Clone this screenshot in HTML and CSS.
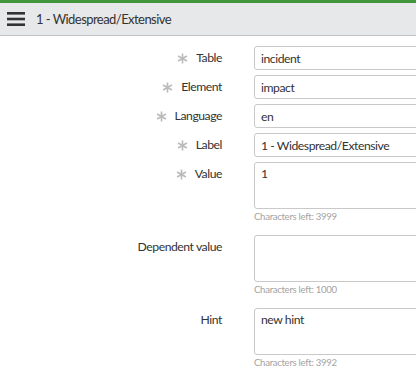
FILE: index.html
```html
<!DOCTYPE html>
<html lang="en">
<head>
<meta charset="utf-8">
<title>1 - Widespread/Extensive</title>
<link rel="stylesheet" href="styles.css">
</head>
<body>
<div class="accent"></div>
<header class="header">
  <svg class="menu" width="18" height="14" viewBox="0 0 18 14" aria-hidden="true">
    <rect x="0" y="0" width="18" height="2.6" fill="#333"/>
    <rect x="0" y="5.7" width="18" height="2.6" fill="#333"/>
    <rect x="0" y="11.4" width="18" height="2.6" fill="#333"/>
  </svg>
  <h1 class="title">1 - Widespread/Extensive</h1>
</header>
<form class="form">
  <div class="row">
    <label class="lbl"><svg class="req" viewBox="0 0 12 12"><path d="M6 0.5V11.5M1.2 3.2L10.8 8.8M1.2 8.8L10.8 3.2"/></svg>Table</label>
    <div class="field"><input class="inp" value="incident"></div>
  </div>
  <div class="row">
    <label class="lbl"><svg class="req" viewBox="0 0 12 12"><path d="M6 0.5V11.5M1.2 3.2L10.8 8.8M1.2 8.8L10.8 3.2"/></svg>Element</label>
    <div class="field"><input class="inp" value="impact"></div>
  </div>
  <div class="row">
    <label class="lbl"><svg class="req" viewBox="0 0 12 12"><path d="M6 0.5V11.5M1.2 3.2L10.8 8.8M1.2 8.8L10.8 3.2"/></svg>Language</label>
    <div class="field"><input class="inp" value="en"></div>
  </div>
  <div class="row">
    <label class="lbl"><svg class="req" viewBox="0 0 12 12"><path d="M6 0.5V11.5M1.2 3.2L10.8 8.8M1.2 8.8L10.8 3.2"/></svg>Label</label>
    <div class="field"><input class="inp" value="1 - Widespread/Extensive"></div>
  </div>
  <div class="row">
    <label class="lbl"><svg class="req" viewBox="0 0 12 12"><path d="M6 0.5V11.5M1.2 3.2L10.8 8.8M1.2 8.8L10.8 3.2"/></svg>Value</label>
    <div class="field"><textarea class="ta">1</textarea><div class="left">Characters left: 3999</div></div>
  </div>
  <div class="row gap">
    <label class="lbl">Dependent value</label>
    <div class="field"><textarea class="ta"></textarea><div class="left">Characters left: 1000</div></div>
  </div>
  <div class="row gap">
    <label class="lbl">Hint</label>
    <div class="field"><textarea class="ta">new hint</textarea><div class="left">Characters left: 3992</div></div>
  </div>
</form>
</body>
</html>
```
FILE: styles.css
```css
html, body {
  margin: 0;
  padding: 0;
  background: #fff;
  overflow: hidden;
}
body {
  font-family: Lato, "Liberation Sans", sans-serif;
  color: #333;
  width: 416px;
  height: 368px;
}
.accent {
  height: 3px;
  background: #43953b;
}
.header {
  display: flex;
  align-items: center;
  height: 32px;
  background: #e7e8e9;
  border-bottom: 1px solid #c2c3c4;
  padding-left: 7px;
  gap: 11px;
}
.menu {
  display: block;
}
.title {
  margin: 0;
  font-size: 13px;
  font-weight: normal;
  color: #333;
  letter-spacing: -0.55px;
}
.form {
  padding-top: 10px;
  display: flex;
  flex-direction: column;
  gap: 5px;
}
.row {
  display: grid;
  grid-template-columns: 222px 162px;
  column-gap: 32px;
}
.row.gap {
  margin-top: 7px;
}
.lbl {
  display: flex;
  justify-content: flex-end;
  align-items: center;
  gap: 8px;
  padding-top: 3px;
  height: 18px;
  line-height: 18px;
  font-size: 12.2px;
  letter-spacing: -0.45px;
  color: #333;
}
.req {
  width: 11px;
  height: 11px;
  fill: none;
  stroke: #bbbbbb;
  stroke-width: 1.8;
}
.field {
  display: flex;
  flex-direction: column;
  min-width: 0;
}
.inp, .ta {
  box-sizing: border-box;
  width: 200px;
  border: 1px solid #c9c9c9;
  border-radius: 3px;
  background: #fff;
  font-family: Lato, "Liberation Sans", sans-serif;
  font-size: 12.2px;
  letter-spacing: -0.45px;
  color: #333;
  margin: 0;
  outline: none;
}
.inp {
  height: 24px;
  padding: 0 6px;
}
.ta {
  height: 47px;
  padding: 3px 6px;
  resize: none;
  line-height: 16px;
  overflow: hidden;
}
.left {
  font-size: 9.6px;
  letter-spacing: -0.3px;
  line-height: 13px;
  color: #a3a3a3;
  padding-top: 1px;
}
```
